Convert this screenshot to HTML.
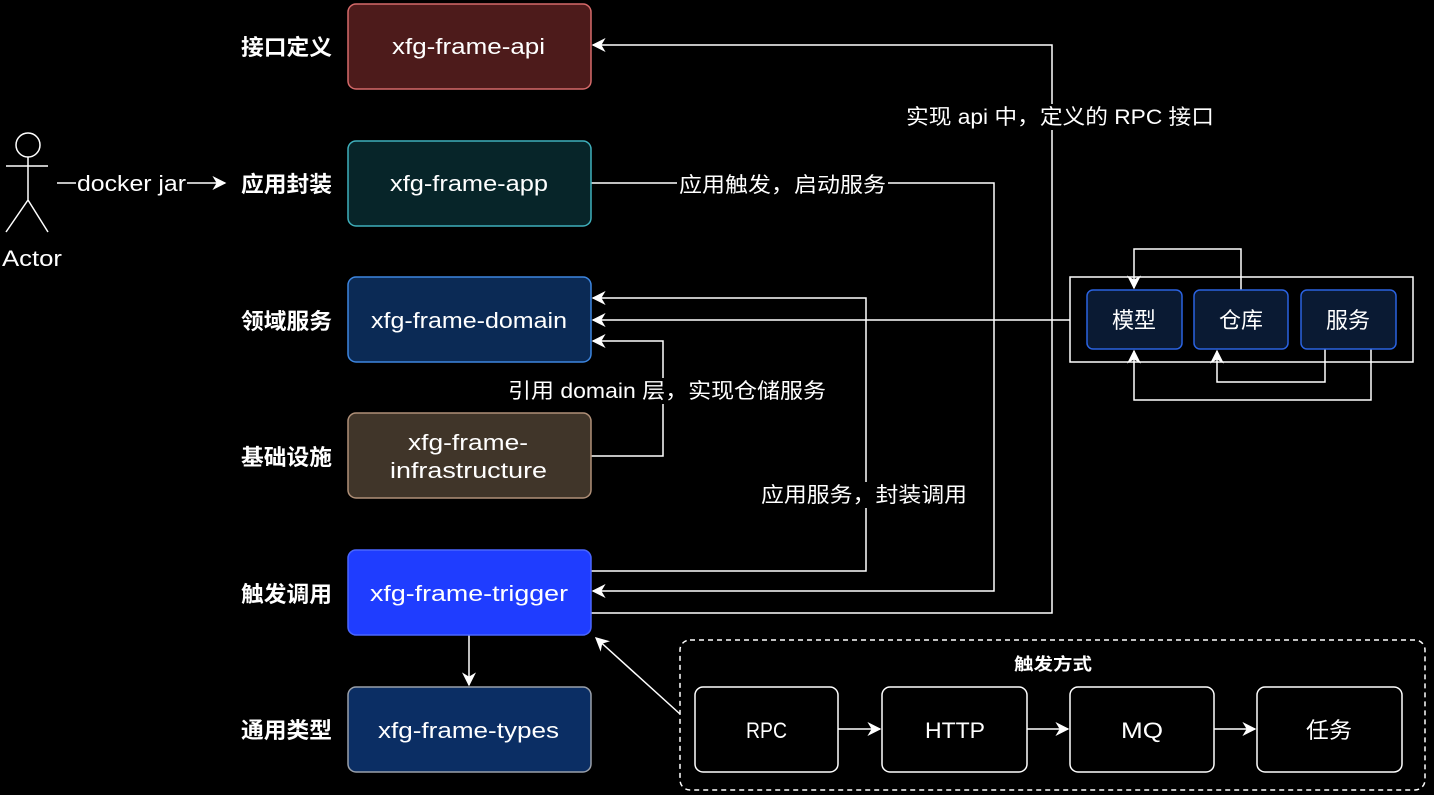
<!DOCTYPE html>
<html><head><meta charset="utf-8"><style>
html,body{margin:0;padding:0;background:#000;width:1434px;height:795px;overflow:hidden}
text{font-family:"Liberation Sans","Noto Sans CJK SC",sans-serif;fill:#fff}
</style></head><body>
<svg width="1434" height="795" viewBox="0 0 1434 795" xmlns="http://www.w3.org/2000/svg">
<defs>
<marker id="a" viewBox="0 0 10 10" refX="9" refY="5" markerWidth="14" markerHeight="14" markerUnits="userSpaceOnUse" orient="auto">
<path d="M0,0 L10,5 L0,10 L3,5 Z" fill="#fff"/></marker>
</defs>
<g fill="none" stroke="#fff" stroke-width="1.5">
<circle cx="28" cy="145" r="12"/>
<path d="M28 157V200M6 166H48M28 200L6 232M28 200L48 232"/>
<path d="M57 183H225" marker-end="url(#a)"/>
<path d="M591 613H1052V45H593" marker-end="url(#a)"/>
<path d="M591 183H994V591H593" marker-end="url(#a)"/>
<path d="M591 571H866V298H593" marker-end="url(#a)"/>
<path d="M1070 320H593" marker-end="url(#a)"/>
<path d="M591 456H663V341H593" marker-end="url(#a)"/>
<path d="M469 635V685" marker-end="url(#a)"/>
<path d="M680 714L596 638" marker-end="url(#a)"/>
<rect x="680" y="640" width="745" height="150" rx="10" stroke-dasharray="5 4"/>
<path d="M838 729H880" marker-end="url(#a)"/>
<path d="M1027 729H1068" marker-end="url(#a)"/>
<path d="M1214 729H1255" marker-end="url(#a)"/>
<rect x="1070" y="277" width="343" height="85"/>
<path d="M1241 290V249H1134V288" marker-end="url(#a)"/>
<path d="M1325 349V382H1217V351" marker-end="url(#a)"/>
<path d="M1371 349V400H1134V351" marker-end="url(#a)"/>
</g>
<rect x="348" y="4" width="243" height="85" rx="8" fill="#4d1b1b" stroke="#d66a6a" stroke-width="1.5"/>
<rect x="348" y="141" width="243" height="85" rx="8" fill="#072529" stroke="#3fb0bc" stroke-width="1.5"/>
<rect x="348" y="277" width="243" height="85" rx="8" fill="#0b2a55" stroke="#3d86e0" stroke-width="1.5"/>
<rect x="348" y="413" width="243" height="85" rx="8" fill="#403529" stroke="#b09078" stroke-width="1.5"/>
<rect x="348" y="550" width="243" height="85" rx="8" fill="#1f3dff" stroke="#4a66ff" stroke-width="1.5"/>
<rect x="348" y="687" width="243" height="85" rx="8" fill="#0b2e64" stroke="#9aa0aa" stroke-width="1.5"/>
<g font-size="22">
<text x="392" y="54" textLength="153" lengthAdjust="spacingAndGlyphs">xfg-frame-api</text>
<text x="390" y="191" textLength="158" lengthAdjust="spacingAndGlyphs">xfg-frame-app</text>
<text x="371" y="328" textLength="196" lengthAdjust="spacingAndGlyphs">xfg-frame-domain</text>
<text x="408" y="450" textLength="120" lengthAdjust="spacingAndGlyphs">xfg-frame-</text>
<text x="390" y="478" textLength="157" lengthAdjust="spacingAndGlyphs">infrastructure</text>
<text x="370" y="601" textLength="198" lengthAdjust="spacingAndGlyphs">xfg-frame-trigger</text>
<text x="378" y="738" textLength="181" lengthAdjust="spacingAndGlyphs">xfg-frame-types</text>
</g>
<g font-size="22" font-weight="bold">
<text x="241" y="55" textLength="91" lengthAdjust="spacingAndGlyphs">接口定义</text>
<text x="241" y="192" textLength="91" lengthAdjust="spacingAndGlyphs">应用封装</text>
<text x="241" y="329" textLength="91" lengthAdjust="spacingAndGlyphs">领域服务</text>
<text x="241" y="465" textLength="91" lengthAdjust="spacingAndGlyphs">基础设施</text>
<text x="241" y="602" textLength="91" lengthAdjust="spacingAndGlyphs">触发调用</text>
<text x="241" y="738" textLength="91" lengthAdjust="spacingAndGlyphs">通用类型</text>
</g>
<text x="2" y="266" font-size="22" textLength="60" lengthAdjust="spacingAndGlyphs">Actor</text>
<rect x="76" y="172" width="111" height="24" fill="#000"/>
<text x="77" y="191" font-size="22" textLength="109" lengthAdjust="spacingAndGlyphs">docker jar</text>
<rect x="904" y="104" width="312" height="26" fill="#000"/>
<text x="906" y="124" font-size="21" textLength="308" lengthAdjust="spacingAndGlyphs">实现 api 中，定义的 RPC 接口</text>
<rect x="677" y="172" width="211" height="26" fill="#000"/>
<text x="679" y="192" font-size="21" textLength="207" lengthAdjust="spacingAndGlyphs">应用触发，启动服务</text>
<rect x="506" y="378" width="322" height="26" fill="#000"/>
<text x="508" y="398" font-size="21" textLength="318" lengthAdjust="spacingAndGlyphs">引用 domain 层，实现仓储服务</text>
<rect x="759" y="482" width="210" height="26" fill="#000"/>
<text x="761" y="502" font-size="21" textLength="206" lengthAdjust="spacingAndGlyphs">应用服务，封装调用</text>
<g fill="#0a1a33" stroke="#2a62e0" stroke-width="1.5">
<rect x="1087" y="290" width="95" height="59" rx="6"/>
<rect x="1194" y="290" width="94" height="59" rx="6"/>
<rect x="1301" y="290" width="95" height="59" rx="6"/>
</g>
<g font-size="22" text-anchor="middle">
<text x="1134" y="328">模型</text>
<text x="1241" y="328">仓库</text>
<text x="1348" y="328">服务</text>
</g>
<g fill="#000" stroke="#fff" stroke-width="1.5">
<rect x="695" y="687" width="143" height="85" rx="8"/>
<rect x="882" y="687" width="145" height="85" rx="8"/>
<rect x="1070" y="687" width="144" height="85" rx="8"/>
<rect x="1257" y="687" width="145" height="85" rx="8"/>
</g>
<text x="1014" y="670" font-size="17" font-weight="bold" textLength="78" lengthAdjust="spacingAndGlyphs">触发方式</text>
<g font-size="22">
<text x="746" y="738" textLength="41" lengthAdjust="spacingAndGlyphs">RPC</text>
<text x="925" y="738" textLength="60" lengthAdjust="spacingAndGlyphs">HTTP</text>
<text x="1121" y="738" textLength="42" lengthAdjust="spacingAndGlyphs">MQ</text>
<text x="1306" y="738" textLength="46" lengthAdjust="spacingAndGlyphs">任务</text>
</g>
</svg>
</body></html>
